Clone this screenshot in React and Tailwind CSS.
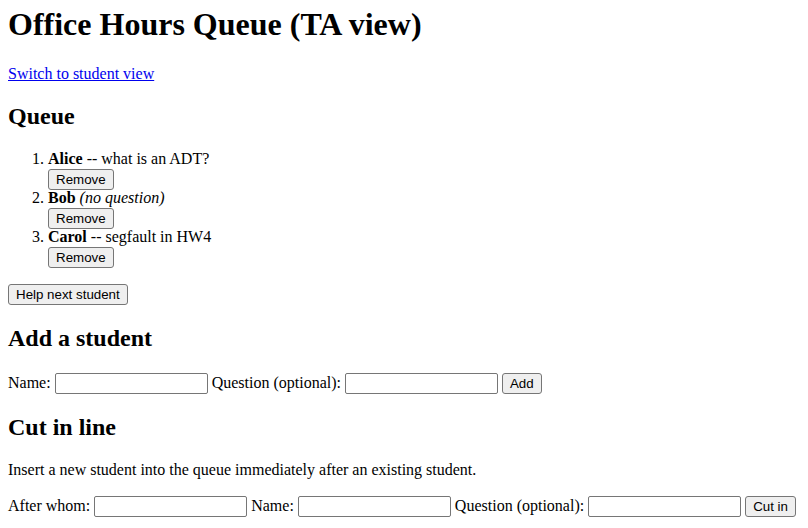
const btn =
  "h-[21px] rounded-[3px] border border-[#767676] bg-[#efefef] px-[7px] font-['Liberation_Sans',Arial,sans-serif] text-[13.33px] leading-none text-black";
const input =
  "h-[21px] w-[153px] rounded-[2px] border border-[#767676] bg-white px-[2px] font-['Liberation_Sans',Arial,sans-serif] text-[13.33px] outline-none";

const queue = [
  { name: "Alice", question: "what is an ADT?" },
  { name: "Bob", question: "" },
  { name: "Carol", question: "segfault in HW4" },
];

export default function App() {
  return (
    <div className="min-h-[528px] bg-white px-[8px] font-['Liberation_Serif','Times_New_Roman',serif] text-[16px] leading-[18.4px] text-black">
      <h1 className="pt-[6px] text-[32px] leading-[36.8px] font-bold">Office Hours Queue (TA view)</h1>

      <p className="mt-[21.4px] pt-[1px]">
        <a href="#" className="text-[#0000ee] underline">
          Switch to student view
        </a>
      </p>

      <h2 className="mt-[19px] text-[24px] leading-[27.6px] font-bold">Queue</h2>

      <ol className="mt-[20px] list-decimal pl-[40px]">
        {queue.map((s) => (
          <li key={s.name} className="h-[39px]">
            <div className="h-[18px]">
              <b>{s.name}</b>{" "}
              {s.question ? <>-- {s.question}</> : <i>(no question)</i>}
            </div>
            <button className={`${btn} mt-[1px] block h-[20px]`}>Remove</button>
          </li>
        ))}
      </ol>

      <button className={`${btn} mt-[17px] block`}>Help next student</button>

      <h2 className="mt-[20px] text-[24px] leading-[27.6px] font-bold">Add a student</h2>

      <div className="mt-[20px] flex h-[21px] items-center gap-[4px]">
        <span>Name:</span>
        <input className={input} />
        <span>Question (optional):</span>
        <input className={input} />
        <button className={`${btn} h-[20px]`}>Add</button>
      </div>

      <h2 className="mt-[20px] text-[24px] leading-[27.6px] font-bold">Cut in line</h2>

      <p className="mt-[20px]">Insert a new student into the queue immediately after an existing student.</p>

      <div className="mt-[16px] flex h-[21px] items-center gap-[4px]">
        <span>After whom:</span>
        <input className={input} />
        <span>Name:</span>
        <input className={input} />
        <span>Question (optional):</span>
        <input className={input} />
        <button className={`${btn} h-[20px]`}>Cut in</button>
      </div>
    </div>
  );
}
